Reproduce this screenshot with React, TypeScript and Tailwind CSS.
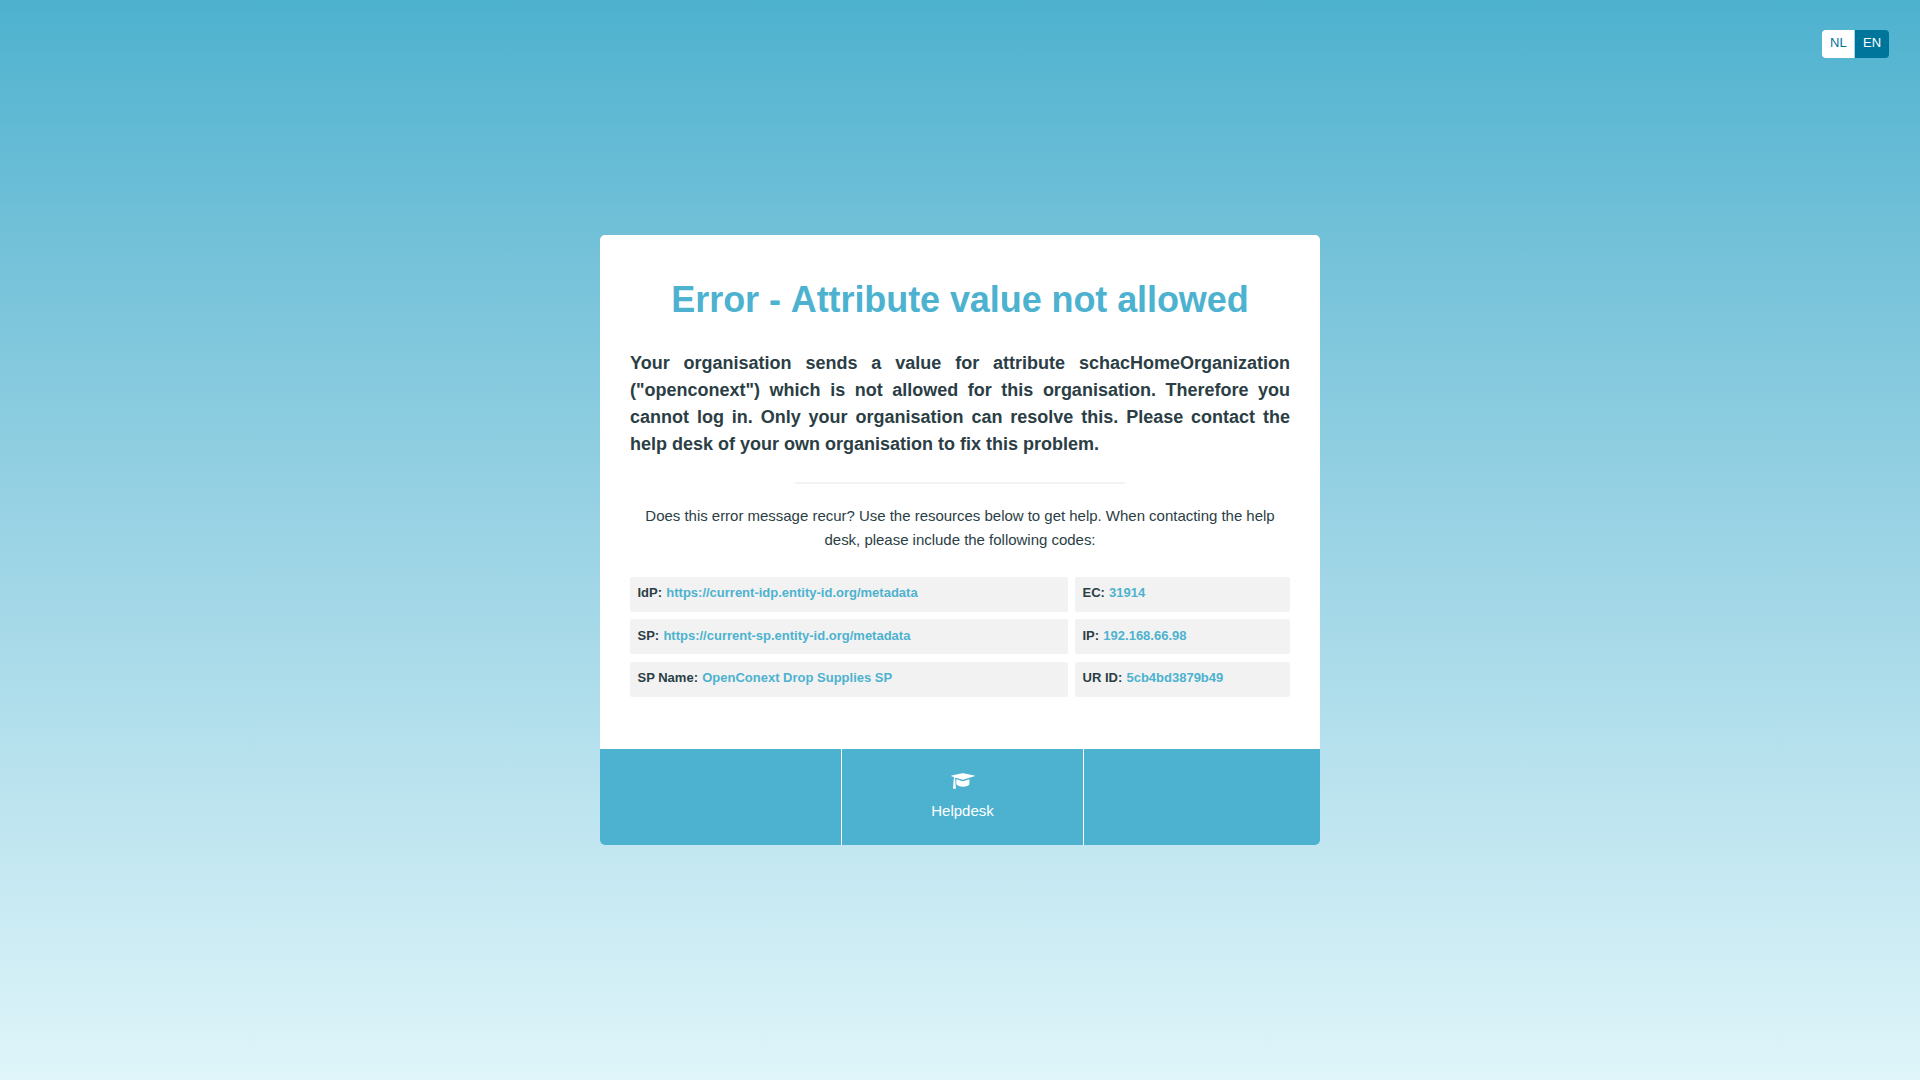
import React from 'react';

type Code = { label: string; value: string };

const rows: { left: Code; right: Code; className: string }[] = [
  {
    left: { label: 'IdP:', value: 'https://current-idp.entity-id.org/metadata' },
    right: { label: 'EC:', value: '31914' },
    className: 'mb-[7px] leading-5',
  },
  {
    left: { label: 'SP:', value: 'https://current-sp.entity-id.org/metadata' },
    right: { label: 'IP:', value: '192.168.66.98' },
    className: 'mb-2 leading-[22px]',
  },
  {
    left: { label: 'SP Name:', value: 'OpenConext Drop Supplies SP' },
    right: { label: 'UR ID:', value: '5cb4bd3879b49' },
    className: 'leading-5',
  },
];

function CodeBox({ label, value }: Code) {
  return (
    <div className="h-[35px] rounded-[2px] bg-[#f2f2f2] px-[7.5px] pt-1.5 font-bold whitespace-nowrap">
      {label} <span className="ml-[0.6px] text-[#4db2cf]">{value}</span>
    </div>
  );
}

function GraduationCap() {
  return (
    <svg viewBox="0 0 24 16" className="h-4 w-6 fill-white" aria-hidden="true">
      <path d="M11.3 0.3 Q11.9 0.1 12.5 0.3 L23.4 2.6 Q24.2 2.9 23.4 3.2 L12.8 6.5 Q11.9 6.8 11 6.5 L4.7 4.7 Q4 5.2 4 6 Q4.7 6.5 4.3 7.6 L4.9 15.8 H2 L2.6 7.6 Q2.1 6.5 2.9 5.9 Q3 5 3.3 4.3 L0.6 3.3 Q-0.2 2.9 0.6 2.6 Z" />
      <path d="M5.3 6.3 L11 8 Q12 8.3 13 8 L18.4 6.3 V11.2 C17.3 14.4 7.2 14.5 5.3 11.2 Z" />
    </svg>
  );
}

export default function App() {
  return (
    <div className="flex h-screen flex-col bg-linear-to-b from-[#4db2cf] to-[#dff5fa] font-['Liberation_Sans',Helvetica,sans-serif]">
      <nav className="mt-[30px] mr-[31px] flex h-7 self-end overflow-hidden rounded-[4px] text-[13px] leading-[25px]">
        <a className="w-[33px] border-r border-[#a9d5e3] bg-white pl-2 text-[#00759b]">NL</a>
        <a className="w-[34px] bg-[#00759b] pl-2 text-white">EN</a>
      </nav>
      <main className="mt-[177px] w-[720px] self-center overflow-hidden rounded-[5px] bg-white text-[#2b3e45]">
        <section className="h-[514px] px-[30px] pt-[43px]">
          <h1 className="text-center text-4xl leading-[44px] font-bold tracking-[-0.08px] text-[#4db2cf] [font-kerning:none]">
            Error - Attribute value not allowed
          </h1>
          <p className="mt-7 text-justify text-lg leading-[27px] font-bold">
            Your organisation sends a value for attribute schacHomeOrganization ("openconext") which is not allowed for
            this organisation. Therefore you cannot log in. Only your organisation can resolve this. Please contact the
            help desk of your own organisation to fix this problem.
          </p>
          <hr className="mx-auto mt-6 w-[330px] border-t-2 border-[#f2f2f2]" />
          <p className="mt-5 text-center text-[15px] leading-6 tracking-[-0.02px]">
            Does this error message recur? Use the resources below to get help. When contacting the help desk, please
            include the following codes:
          </p>
          <div className="mt-[25px] text-[13px]">
            {rows.map((row) => (
              <div key={row.left.label} className={`grid grid-cols-[438px_215px] gap-[7px] ${row.className}`}>
                <CodeBox {...row.left} />
                <CodeBox {...row.right} />
              </div>
            ))}
          </div>
        </section>
        <footer className="grid h-24 grid-cols-[242px_242px_236px] bg-[#4db2cf] text-[15px] text-white">
          <div className="border-r border-white" />
          <a className="flex flex-col items-center border-r border-white pt-6">
            <GraduationCap />
            <span className="mt-[10px] leading-6">Helpdesk</span>
          </a>
          <div />
        </footer>
      </main>
    </div>
  );
}
